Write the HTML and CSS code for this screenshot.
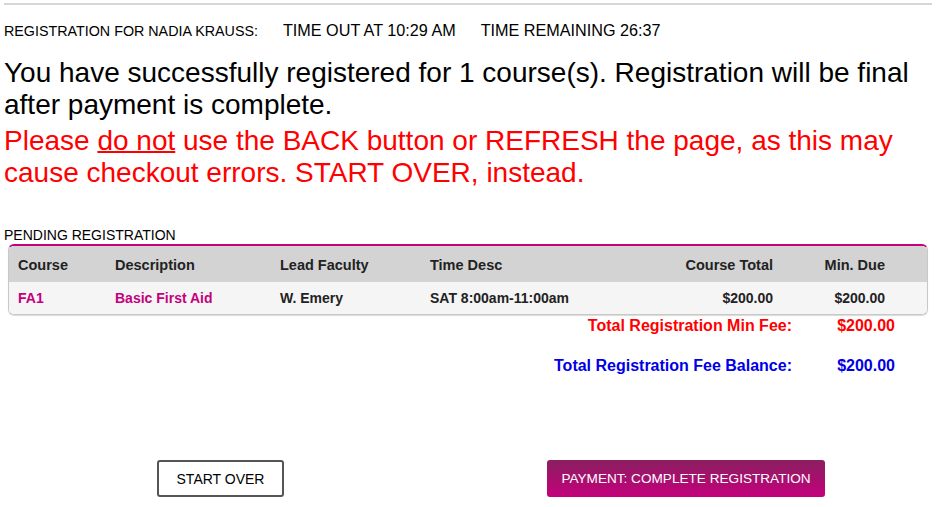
FILE: index.html
```html
<!DOCTYPE html>
<html>
<head>
<meta charset="utf-8">
<link rel="stylesheet" href="styles.css">
</head>
<body>
<div class="topline"></div>
<div class="status">
  <span class="who">REGISTRATION FOR NADIA KRAUSS:</span>
  <span class="time">TIME OUT AT 10:29 AM</span>
  <span class="time">TIME REMAINING 26:37</span>
</div>
<p class="success">You have successfully registered for 1 course(s). Registration will be final after payment is complete.</p>
<p class="warning">Please <u>do not</u> use the BACK button or REFRESH the page, as this may cause checkout errors. START OVER, instead.</p>
<div class="section-title">PENDING REGISTRATION</div>
<div class="card">
  <div class="row head">
    <div class="c-course">Course</div>
    <div class="c-desc">Description</div>
    <div class="c-fac">Lead Faculty</div>
    <div class="c-time">Time Desc</div>
    <div class="c-total">Course Total</div>
    <div class="c-due">Min. Due</div>
  </div>
  <div class="row data">
    <div class="c-course link">FA1</div>
    <div class="c-desc link">Basic First Aid</div>
    <div class="c-fac">W. Emery</div>
    <div class="c-time">SAT 8:00am-11:00am</div>
    <div class="c-total">$200.00</div>
    <div class="c-due">$200.00</div>
  </div>
</div>
<div class="totals">
  <div class="trow red"><span class="tl">Total Registration Min Fee:</span><span class="tv">$200.00</span></div>
  <div class="trow blue"><span class="tl">Total Registration Fee Balance:</span><span class="tv">$200.00</span></div>
</div>
<div class="actions">
  <button class="btn outline">START OVER</button>
  <button class="btn primary">PAYMENT: COMPLETE REGISTRATION</button>
</div>
</body>
</html>
```
FILE: styles.css
```css
html, body {
  margin: 0;
  padding: 0;
  background: #fff;
}
body {
  font-family: "Liberation Sans", Arial, sans-serif;
  color: #000;
  padding: 0 4px;
  width: 928px;
}
.topline {
  height: 2px;
  background: #d6d6d6;
  margin-top: 3px;
}
.status {
  display: flex;
  align-items: baseline;
  margin-top: 16px;
  height: 24px;
}
.who {
  font-size: 14.3px;
  margin-right: 25px;
}
.time {
  font-size: 16.2px;
  margin-right: 25px;
}
.success {
  margin: 12px 0 0;
  font-size: 28px;
  line-height: 32px;
}
.warning {
  margin: 4px 0 0;
  font-size: 28px;
  line-height: 32px;
  color: #ff0000;
}
.warning u {
  text-decoration-thickness: 2px;
}
.section-title {
  margin-top: 38px;
  font-size: 14px;
  line-height: 16px;
}
.card {
  margin: 1px 4px 0;
  border: 1px solid #c8c8c8;
  border-top: 2px solid #c4007c;
  border-radius: 6px;
  overflow: hidden;
  box-shadow: 0 1px 1px rgba(0,0,0,0.15);
}
.row {
  display: grid;
  grid-template-columns: 97px 165px 150px 200px 143px 112px 1fr;
  padding-left: 9px;
  align-items: center;
  font-weight: bold;
  color: #222;
}
.row.head {
  height: 36px;
  padding-top: 1px;
  box-sizing: border-box;
  background: #d3d3d3;
  font-size: 14.5px;
}
.row.data {
  height: 32px;
  background: #f5f5f5;
  font-size: 14px;
}
.c-total, .c-due {
  text-align: right;
}
.link {
  color: #c4007c;
}
.totals {
  margin-top: 1px;
  font-weight: bold;
  font-size: 16px;
}
.trow {
  display: flex;
  justify-content: flex-end;
  padding-right: 37px;
  line-height: 20px;
}
.trow + .trow {
  margin-top: 20px;
}
.tl {
  text-align: right;
}
.tv {
  width: 58px;
  margin-left: 45px;
  text-align: right;
}
.red { color: #ff0000; }
.blue { color: #0000e6; }
.actions {
  margin-top: 84px;
  display: flex;
  align-items: center;
}
.btn {
  font-family: "Liberation Sans", Arial, sans-serif;
  font-size: 14px;
  height: 37px;
  border-radius: 3px;
  cursor: pointer;
}
.btn.outline {
  margin-left: 153px;
  width: 127px;
  background: #fff;
  border: 2px solid #555;
  color: #000;
}
.btn.primary {
  margin-left: 263px;
  width: 278px;
  background: linear-gradient(to bottom, #8a1f60, #c4007c);
  border: none;
  color: #fff;
  font-size: 13.6px;
}
```
